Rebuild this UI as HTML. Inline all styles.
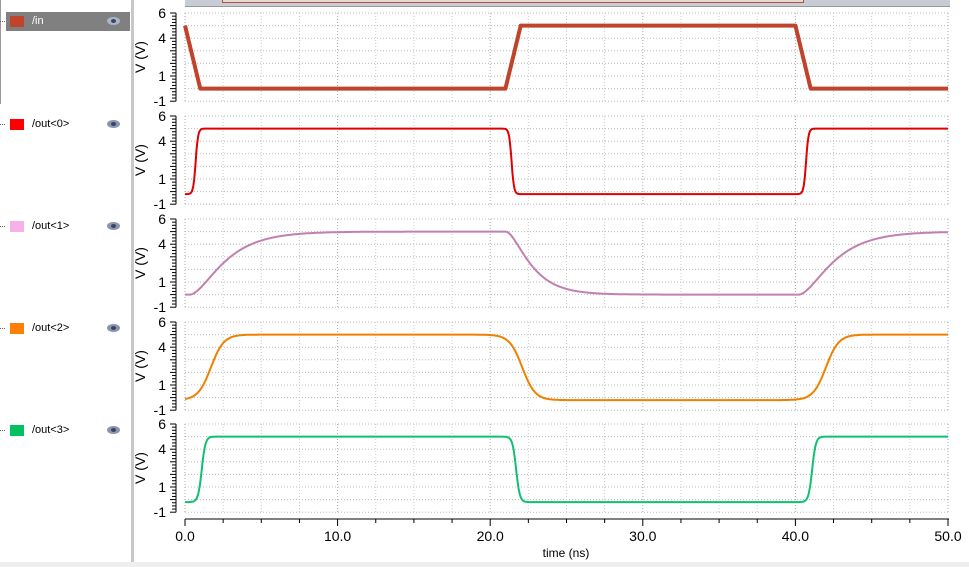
<!DOCTYPE html>
<html><head><meta charset="utf-8"><style>
body{margin:0;width:969px;height:567px;background:#fff;overflow:hidden;font-family:"Liberation Sans",sans-serif;position:relative}
.lp{position:absolute;left:0;top:0;width:131px;height:567px;background:#fff}
.row{position:absolute;left:6px;width:124px;height:19px;font-size:11px;color:#000}
.sw{position:absolute;left:4px;top:4px;width:14px;height:11px}
.lb{position:absolute;left:26px;top:3px}
.eye{position:absolute;left:101px;top:5px;width:13px;height:8px;border-radius:50%;background:#8a96b0}
.eye:after{content:"";position:absolute;left:4px;top:2px;width:5px;height:4px;border-radius:50%;background:#3a4560}
.dt{position:absolute;left:0;width:5px;border-top:1px dotted #666}
</style></head><body>
<div class="lp">
<div style="position:absolute;left:0;top:0;width:1px;height:104px;background:#999"></div>
<div class="dt" style="top:21px"></div>
<div class="row" style="top:12px;background:#808080"><div class="sw" style="background:#c0432c"></div><div class="lb" style="color:#fff">/in</div><div class="eye" style="background:#aab4c8"></div></div>
<div class="dt" style="top:124px"></div>
<div class="row" style="top:115px"><div class="sw" style="background:#f00"></div><div class="lb">/out&lt;0&gt;</div><div class="eye"></div></div>
<div class="dt" style="top:226px"></div>
<div class="row" style="top:217px"><div class="sw" style="background:#f8b0e8"></div><div class="lb">/out&lt;1&gt;</div><div class="eye"></div></div>
<div class="dt" style="top:328px"></div>
<div class="row" style="top:319px"><div class="sw" style="background:#ff8000"></div><div class="lb">/out&lt;2&gt;</div><div class="eye"></div></div>
<div class="dt" style="top:430px"></div>
<div class="row" style="top:421px"><div class="sw" style="background:#00c060"></div><div class="lb">/out&lt;3&gt;</div><div class="eye"></div></div>
</div>
<div style="position:absolute;left:131px;top:0;width:3px;height:567px;background:#c8c8c8"></div>
<div style="position:absolute;left:0;top:562px;width:969px;height:5px;background:#eee"></div>
<div style="position:absolute;left:185px;top:0;width:765px;height:6px;background:#c8ccd4;border-bottom:1px solid #999"></div>
<div style="position:absolute;left:222px;top:0;width:580px;height:2px;background:#e8d8d0;border:1px solid #b05040;border-top:none"></div>
<svg id="s" width="969" height="567" style="position:absolute;left:0;top:0" font-family="Liberation Sans" font-size="14"></svg>
<script>
var s=document.getElementById('s'),h='';
var X=t=>185+t*15.26;
var tops=[13,116,219,322,424],cols=['#c0432c','#e00000','#c080b0','#f08000','#10c070'];
function yv(p,v){return tops[p]+(6-v)*12.6}
for(var p=0;p<5;p++){
 var t0=tops[p],b=yv(p,-1);
 for(var i=0;i<=7;i++){var y=t0+i*12.6;h+='<line x1="185" x2="949" y1="'+y+'" y2="'+y+'" stroke="#bbb" stroke-dasharray="1,2"/>';}
 for(var k=0;k<=50;k+=2.5){h+='<line x1="'+X(k)+'" x2="'+X(k)+'" y1="'+t0+'" y2="'+b+'" stroke="'+(k%10==0?'#aaa':'#ccc')+'" stroke-dasharray="1,2"/>';}
 h+='<line x1="176" x2="176" y1="'+t0+'" y2="'+b+'" stroke="#000"/>';
 for(var i=0;i<=28;i++){var y=t0+i*3.15;h+='<line x1="'+(i%4==0?170:172)+'" x2="176" y1="'+y+'" y2="'+y+'" stroke="#000"/>';}
 [[6,'6'],[4,'4'],[1,'1'],[-1,'-1']].forEach(a=>{h+='<text x="166" y="'+(yv(p,a[0])+5)+'" text-anchor="end">'+a[1]+'</text>'});
 h+='<text transform="translate(145,'+(t0+44)+') rotate(-90)" text-anchor="middle">V (V)</text>';
}
function sig(p,f){var d='';for(var t=0;t<=50;t+=0.05){d+=(t?'L':'M')+X(t).toFixed(1)+','+yv(p,f(t)).toFixed(1);}return d}
function lin(t){ if(t<1)return 5-5*t; if(t<21)return 0; if(t<22)return 5*(t-21); if(t<40)return 5; if(t<41)return 5-5*(t-40); return 0;}
function rc(t,tr,tf,tr2,tau){var s=x=>1/(1+Math.exp(-x));
 var r1=s((t-tr)/tau),f=s((t-tf)/tau),r2=s((t-tr2)/tau);return -0.2+5.2*(r1-f+r2);}
var fs=[lin,
 t=>rc(t,0.7,21.4,40.7,0.08),
 t=>{var v=5*Math.min(1,(1-Math.exp(-Math.max(0,t-0.3)/1.8))**2);
   if(t>21)v=5*(1-Math.min(1,(1-Math.exp(-(t-21)/1.3))**2)); if(t>40.2)v=5*Math.min(1,(1-Math.exp(-(t-40.2)/1.8))**2); return v;},
 t=>rc(t,1.7,22.1,42.0,0.42),
 t=>rc(t,1.1,21.7,41.1,0.12)];
for(var p=0;p<5;p++)h+='<path d="'+sig(p,fs[p])+'" fill="none" stroke="'+cols[p]+'" stroke-width="'+(p?2:4)+'" stroke-linejoin="round"/>';
h+='<line x1="185" x2="949" y1="519" y2="519" stroke="#000"/>';
for(var k=0;k<=50;k+=2.5)h+='<line x1="'+X(k)+'" x2="'+X(k)+'" y1="519" y2="'+(k%10==0?526:523)+'" stroke="#000"/>';
for(var k=0;k<=50;k+=10)h+='<text x="'+X(k)+'" y="541" text-anchor="middle">'+k.toFixed(1)+'</text>';
h+='<text x="566" y="557" text-anchor="middle" font-size="12">time (ns)</text>';
s.innerHTML=h;
</script>
</body></html>
